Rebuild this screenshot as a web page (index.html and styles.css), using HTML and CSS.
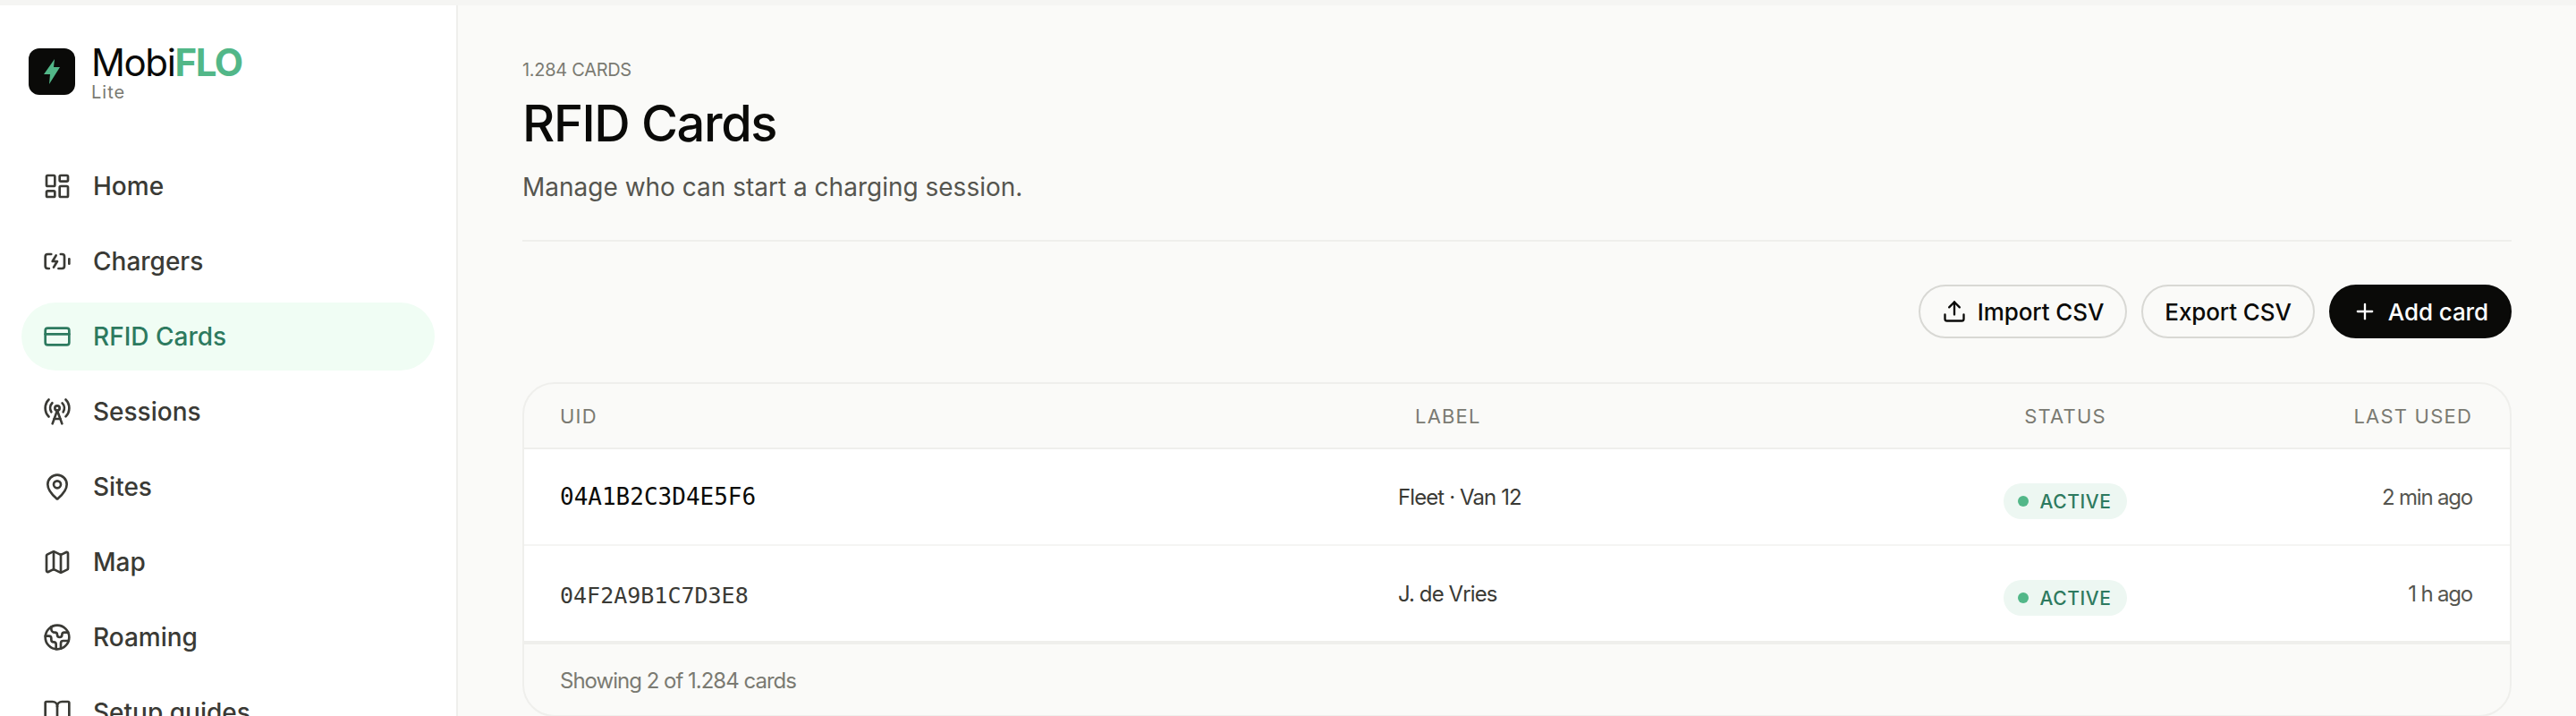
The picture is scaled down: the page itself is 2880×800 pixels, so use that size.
FILE: index.html
```html
<!DOCTYPE html>
<html lang="en">
<head>
<meta charset="utf-8">
<title>RFID Cards</title>
<link rel="stylesheet" href="styles.css">
</head>
<body>
<div class="shell">
  <aside class="sidebar">
    <div class="brand">
      <div class="logo"><svg viewBox="0 0 52 52" class="bolt"><path d="M29 12 17 29h7l-1 11 12-19h-7z"/></svg></div>
      <div class="brand-text">
        <div class="brand-name">Mobi<span class="flo">FLO</span></div>
        <div class="brand-sub">Lite</div>
      </div>
    </div>
    <nav class="nav">
      <a class="nav-item"><svg class="ic" viewBox="0 0 24 24"><rect x="3" y="3" width="7" height="9" rx="1"/><rect x="14" y="3" width="7" height="5" rx="1"/><rect x="14" y="12" width="7" height="9" rx="1"/><rect x="3" y="16" width="7" height="5" rx="1"/></svg><span>Home</span></a>
      <a class="nav-item"><svg class="ic" viewBox="0 0 24 24"><path d="m11 7-3 5h4l-3 5"/><path d="M14.856 6H16a2 2 0 0 1 2 2v8a2 2 0 0 1-2 2h-2.935"/><path d="M22 14v-4"/><path d="M5.14 18H4a2 2 0 0 1-2-2V8a2 2 0 0 1 2-2h2.936"/></svg><span>Chargers</span></a>
      <a class="nav-item active"><svg class="ic" viewBox="0 0 24 24"><rect x="2" y="5" width="20" height="14" rx="2"/><path d="M2 10h20"/></svg><span>RFID Cards</span></a>
      <a class="nav-item"><svg class="ic" viewBox="0 0 24 24"><path d="M4.9 16.1C1 12.2 1 5.8 4.9 1.9"/><path d="M7.8 4.7a6.14 6.14 0 0 0-.8 7.5"/><circle cx="12" cy="9" r="2"/><path d="M16.2 4.8c2 2 2.26 5.11.8 7.47"/><path d="M19.1 1.9a9.96 9.96 0 0 1 0 14.1"/><path d="M9.5 18h5"/><path d="m8 22 4-11 4 11"/></svg><span>Sessions</span></a>
      <a class="nav-item"><svg class="ic" viewBox="0 0 24 24"><path d="M20 10c0 4.993-5.539 10.193-7.399 11.799a1 1 0 0 1-1.202 0C9.539 20.193 4 14.993 4 10a8 8 0 0 1 16 0"/><circle cx="12" cy="10" r="3"/></svg><span>Sites</span></a>
      <a class="nav-item"><svg class="ic" viewBox="0 0 24 24"><path d="M14.106 5.553a2 2 0 0 0 1.788 0l3.659-1.83A1 1 0 0 1 21 4.619v12.764a1 1 0 0 1-.553.894l-4.553 2.277a2 2 0 0 1-1.788 0l-4.212-2.106a2 2 0 0 0-1.788 0l-3.659 1.83A1 1 0 0 1 3 19.381V6.618a1 1 0 0 1 .553-.894l4.553-2.277a2 2 0 0 1 1.788 0z"/><path d="M15 5.764v15"/><path d="M9 3.236v15"/></svg><span>Map</span></a>
      <a class="nav-item"><svg class="ic" viewBox="0 0 24 24"><path d="M21.54 15H17a2 2 0 0 0-2 2v4.54"/><path d="M7 3.34V5a3 3 0 0 0 3 3a2 2 0 0 1 2 2c0 1.1.9 2 2 2a2 2 0 0 0 2-2c0-1.1.9-2 2-2h3.17"/><path d="M11 21.95V18a2 2 0 0 0-2-2a2 2 0 0 1-2-2v-1a2 2 0 0 0-2-2H2.05"/><circle cx="12" cy="12" r="10"/></svg><span>Roaming</span></a>
      <a class="nav-item"><svg class="ic" viewBox="0 0 24 24"><path d="M12 7v14"/><path d="M3 18a1 1 0 0 1-1-1V4a1 1 0 0 1 1-1h5a4 4 0 0 1 4 4 4 4 0 0 1 4-4h5a1 1 0 0 1 1 1v13a1 1 0 0 1-1 1h-6a3 3 0 0 0-3 3 3 3 0 0 0-3-3z"/></svg><span>Setup guides</span></a>
    </nav>
  </aside>
  <main class="main">
    <header class="page-head">
      <div class="kicker">1.284 CARDS</div>
      <h1 class="title">RFID Cards</h1>
      <p class="subtitle">Manage who can start a charging session.</p>
    </header>
    <div class="actions">
      <button class="btn"><svg class="btn-ic" viewBox="0 0 24 24"><path d="M21 15v4a2 2 0 0 1-2 2H5a2 2 0 0 1-2-2v-4"/><path d="M17 8l-5-5-5 5"/><path d="M12 3v12"/></svg>Import CSV</button>
      <button class="btn">Export CSV</button>
      <button class="btn primary"><svg class="btn-ic" viewBox="0 0 24 24"><path d="M5 12h14"/><path d="M12 5v14"/></svg>Add card</button>
    </div>
    <section class="card">
      <div class="row head">
        <div>UID</div>
        <div class="label-head">LABEL</div>
        <div class="center">STATUS</div>
        <div class="right">LAST USED</div>
      </div>
      <div class="row body">
        <div class="uid strong">04A1B2C3D4E5F6</div>
        <div class="label">Fleet · Van 12</div>
        <div class="center"><span class="badge"><i class="dot"></i>ACTIVE</span></div>
        <div class="right when">2 min ago</div>
      </div>
      <div class="row body last">
        <div class="uid soft">04F2A9B1C7D3E8</div>
        <div class="label">J. de Vries</div>
        <div class="center"><span class="badge"><i class="dot"></i>ACTIVE</span></div>
        <div class="right when">1 h ago</div>
      </div>
      <div class="foot">Showing 2 of 1.284 cards</div>
    </section>
  </main>
</div>
</body>
</html>
```
FILE: styles.css
```css
* { box-sizing: border-box; }
html, body { margin: 0; height: 800px; overflow: hidden; }
body {
  background: #f5f5f3;
  padding-top: 6px;
  font-family: Inter, "Liberation Sans", sans-serif;
  color: #0a0a08;
}
.shell { display: flex; height: 1100px; }
.sidebar {
  width: 512px;
  flex: none;
  background: #fff;
  border-right: 2px solid #efefec;
  padding: 46px 24px 0;
}
.brand { display: flex; align-items: center; gap: 18px; padding-left: 8px; height: 56px; }
.logo { width: 52px; height: 52px; border-radius: 12px; background: #0a0a08; flex: none; }
.bolt { display: block; width: 52px; height: 52px; fill: #52b788; }
.brand-text { display: flex; flex-direction: column; }
.brand-name { font-size: 42px; line-height: 46px; letter-spacing: -1.4px; font-weight: 400; }
.flo { color: #52b788; font-weight: 700; }
.brand-sub { font-size: 20px; line-height: 20px; color: #7a7a72; letter-spacing: 1px; }
.nav { display: flex; flex-direction: column; gap: 8px; margin-top: 62px; }
.nav-item {
  display: flex; align-items: center; gap: 24px;
  height: 76px; padding: 0 24px;
  border-radius: 38px;
  font-size: 28px; font-weight: 500; color: #3a3a35;
  flex: none;
}
.nav-item.active { background: #f0fdf4; color: #2d7a5f; }
.ic { width: 32px; height: 32px; flex: none; fill: none; stroke: currentColor; stroke-width: 2; stroke-linecap: round; stroke-linejoin: round; }
.main { flex: 1; min-width: 0; background: #fafaf8; padding: 60px 72px 0; }
.page-head { border-bottom: 2px solid #efefec; height: 204px; }
.kicker { font-size: 20px; line-height: 24px; color: #7a7a72; letter-spacing: -.3px; }
.title { margin: 12px 0 0; font-size: 56px; line-height: 72px; font-weight: 500; letter-spacing: -1.4px; }
.subtitle { margin: 15px 0 0; font-size: 28px; line-height: 40px; color: #55554f; }
.actions { display: flex; justify-content: flex-end; gap: 16px; margin-top: 48px; }
.btn {
  display: inline-flex; align-items: center; gap: 12px;
  height: 60px; padding: 0 24px;
  border: 2px solid #d8d8d4; border-radius: 30px;
  background: transparent; color: #0a0a08;
  font: 500 26px Inter, "Liberation Sans", sans-serif;
  letter-spacing: -.1px;
}
.btn.primary { background: #0a0a08; border-color: #0a0a08; color: #fff; }
.btn-ic { width: 28px; height: 28px; fill: none; stroke: currentColor; stroke-width: 2; stroke-linecap: round; stroke-linejoin: round; flex: none; }
.card { margin-top: 49px; border: 2px solid #efefec; border-radius: 36px; overflow: hidden; height: 374px; }
.row {
  display: grid;
  grid-template-columns: 936px 492px 510px 200px;
  padding: 0 40px;
  align-items: center;
}
.row.head { height: 73px; border-bottom: 2px solid #efefec; font-size: 22px; letter-spacing: 1.2px; color: #7a7a72; font-weight: 400; }
.label-head { padding-left: 20px; }
.center { text-align: center; }
.right { text-align: right; }
.row.body { background: #fff; height: 108px; border-bottom: 2px solid #f5f5f3; }
.row.body.last { border-bottom: 2px solid #efefec; height: 108px; }
.uid { font-family: "DejaVu Sans Mono", "Liberation Mono", monospace; }
.uid.strong { font-size: 26px; color: #0a0a08; }
.uid.soft { font-size: 25px; color: #3a3a35; padding-top: 5px; }
.label { font-size: 24px; color: #3a3a35; letter-spacing: -.9px; padding-left: 1px; }
.when { font-size: 24px; color: #55554f; letter-spacing: -1.2px; }
.badge {
  display: inline-flex; align-items: center; gap: 12px;
  height: 40px; padding: 0 17px 0 16px;
  border-radius: 20px; background: #edf7f2; color: #2d7a5f;
  font-size: 21px; font-weight: 500; letter-spacing: .6px;
  margin-top: 10px; vertical-align: top;
}
.dot { width: 12px; height: 12px; border-radius: 50%; background: #52b788; flex: none; }
.foot { padding: 4px 40px 0; height: 78px; border-top: 2px solid #efefec; display: flex; align-items: center; font-size: 24px; color: #7a7a72; letter-spacing: -1px; }
```
